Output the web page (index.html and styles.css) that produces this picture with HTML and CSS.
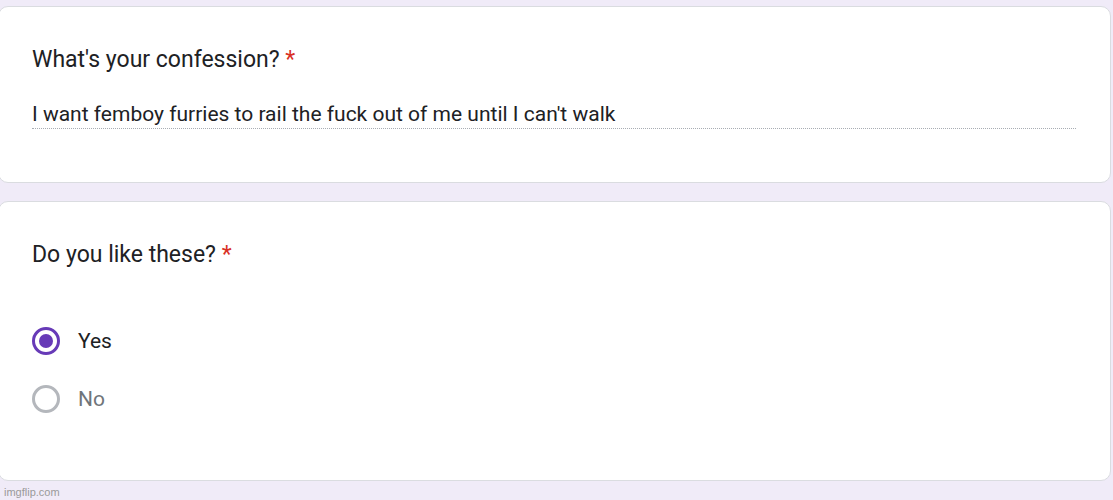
FILE: index.html
```html
<!DOCTYPE html>
<html lang="en">
<head>
  <meta charset="UTF-8">
  <title>Form response</title>
  <link rel="stylesheet" href="styles.css">
</head>
<body>
  <div class="form">
    <div class="card">
      <div class="question">What's your confession? <span class="req">*</span></div>
      <div class="answer">I want femboy furries to rail the fuck out of me until I can't walk</div>
    </div>

    <div class="card card-choice">
      <div class="question">Do you like these? <span class="req">*</span></div>
      <div class="options">
        <label class="option checked">
          <span class="radio"></span>
          <span class="option-text">Yes</span>
        </label>
        <label class="option">
          <span class="radio"></span>
          <span class="option-text">No</span>
        </label>
      </div>
    </div>
  </div>
  <div class="watermark">imgflip.com</div>
</body>
</html>
```

FILE: styles.css
```css
body {
  margin: 0;
  background-color: #f0ebf8;
  font-family: Roboto, "Liberation Sans", sans-serif;
  color: #202124;
  height: 500px;
  overflow: hidden;
  position: relative;
}
.form {
  padding-top: 6px;
  margin-left: -2px;
  margin-right: 2px;
}
.card {
  background: #fff;
  border: 1px solid #dadce0;
  border-radius: 10px;
  padding: 38px 34px 0 33px;
  height: 137px;
  margin-bottom: 18px;
}
.card-choice {
  height: 240px;
}
.question {
  font-size: 23px;
  line-height: 30px;
}
.req {
  color: #d93025;
}
.answer {
  margin-top: 26px;
  font-size: 21px;
  line-height: 26px;
  padding-bottom: 1px;
  border-bottom: 1px dotted #a8adb3;
}
.option-text {
  font-size: 21px;
  color: #70757a;
}
.options {
  margin-top: 57px;
  display: flex;
  flex-direction: column;
  gap: 30px;
}
.option {
  display: flex;
  align-items: center;
  gap: 18px;
  height: 28px;
}
.radio {
  width: 22px;
  height: 22px;
  border: 3px solid #b4b7bc;
  border-radius: 50%;
  box-sizing: content-box;
  position: relative;
}
.checked .radio {
  border-color: #673ab7;
}
.checked .radio::after {
  content: "";
  position: absolute;
  left: 4px;
  top: 4px;
  width: 14px;
  height: 14px;
  border-radius: 50%;
  background: #673ab7;
}
.checked .option-text {
  color: #202124;
}
.watermark {
  position: absolute;
  left: 4px;
  bottom: 2px;
  font-family: "Liberation Sans", sans-serif;
  font-size: 11px;
  color: #9a9a9a;
}
```
